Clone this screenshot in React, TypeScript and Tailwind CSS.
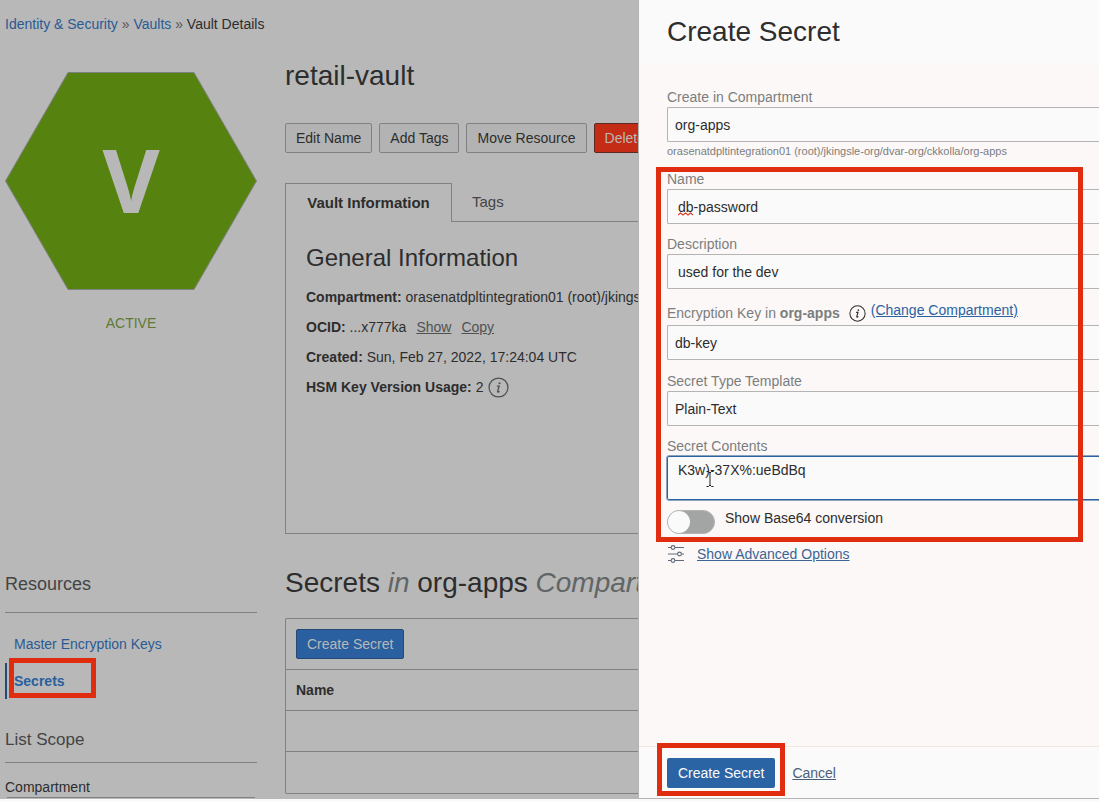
import React from "react";

const selectClass =
  "block h-[35px] w-full appearance-none rounded-l-[2px] border border-r-0 border-[#b4b4b4] bg-[#fafafa] px-[7px] text-[#2d2d2d] outline-none";
const inputClass =
  "block h-[35px] w-full rounded-l-[2px] border border-r-0 border-[#b4b4b4] bg-[#fafafa] px-[10px] text-[#2d2d2d] outline-none";
const labelClass = "block leading-5 text-[#7c7e7e]";
const actionClass =
  "h-[30px] shrink-0 rounded-[2px] border border-[#7f8282] bg-[#b3b3b3] px-[10px] whitespace-nowrap text-[#2d2d2d]";

function InfoIcon({ size }: { size: number }) {
  return (
    <svg width={size} height={size} viewBox="0 0 20 20" fill="none" stroke="currentColor" aria-hidden="true">
      <circle cx="10" cy="10" r="9" strokeWidth="1.2" />
      <path d="M8.4 8.7h2.2L9.2 13.4q-.3 1.2.9.7l.9-.5" strokeWidth="1.3" />
      <circle cx="11" cy="6" r="1" fill="currentColor" stroke="none" />
    </svg>
  );
}

function SlidersIcon() {
  return (
    <svg width="18" height="18" viewBox="0 0 18 18" fill="none" stroke="#5d6b7a" strokeWidth="1.1" aria-hidden="true">
      <path d="M1 2.500h3M8 2.500h9M1 9h9.500M14.500 9H17M1 15.500h3M8 15.500h9" />
      <circle cx="6" cy="2.500" r="1.900" />
      <circle cx="12.500" cy="9" r="1.900" />
      <circle cx="6" cy="15.500" r="1.900" />
    </svg>
  );
}

function Sidebar() {
  return (
    <aside className="w-[252px] shrink-0 pt-[14px]">
      <nav aria-label="Breadcrumb" className="leading-5 whitespace-nowrap text-[#2d2d2d]">
        <a href="#identity" className="text-[#2a5a94]">Identity &amp; Security</a>
        <span className="text-[#555]"> » </span>
        <a href="#vaults" className="text-[#2a5a94]">Vaults</a>
        <span className="text-[#555]"> » </span>
        <span>Vault Details</span>
      </nav>
      <svg className="mt-[38px] block" width="252" height="218" viewBox="0 0 252 218" role="img" aria-label="Vault">
        <path d="M63 .5H189L251.500 109 189 217.500H63L.5 109Z" fill="#56830f" stroke="#7f8282" />
        <text x="126" y="141" textAnchor="middle" fontFamily="'Noto Sans', sans-serif" fontWeight="700" fontSize="88" fill="#b8b8b8">V</text>
      </svg>
      <p className="mt-[23px] text-center leading-5 text-[#5f7a35]">ACTIVE</p>

      <h2 className="mt-[239px] border-b border-[#7f8282] pb-4 text-lg leading-6 text-[#444]">Resources</h2>
      <ul className="mt-[12px]">
        <li className="flex h-[38px] items-center pl-[9px]">
          <a href="#keys" className="text-[#2a5a94]">Master Encryption Keys</a>
        </li>
        <li className="relative flex h-[36px] items-center border-l-2 border-[#254a78] pl-[7px]">
          <a href="#secrets" className="font-bold text-[#2a5f9e]">Secrets</a>
          <span className="pointer-events-none absolute -top-[5px] left-[2px] h-[40px] w-[87px] border-[5px] border-[#e02d10]" />
        </li>
      </ul>
      <h2 className="mt-[29px] border-b border-[#7f8282] pb-[10px] text-[17px] leading-6 text-[#444]">List Scope</h2>
      <h3 className="mt-[14px] leading-5 text-[#2d2d2d]">Compartment</h3>
      <div className="mx-[2px] border-t border-[#7f8282]" />
    </aside>
  );
}

function VaultDetails() {
  return (
    <main className="min-w-0 flex-1 overflow-hidden pt-[58px] text-[#2d2d2d]">
      <h1 className="text-[28px] leading-9">retail-vault</h1>
      <div className="mt-[29px] flex gap-[7px]">
        <button className={actionClass}>Edit Name</button>
        <button className={actionClass}>Add Tags</button>
        <button className={actionClass}>Move Resource</button>
        <button className="h-[30px] shrink-0 rounded-[2px] border border-[#5c2a22] bg-[#c42c15] px-[10px] text-[#b8b8b8]">Delete</button>
      </div>

      <div className="mt-[30px] flex" role="tablist">
        <button role="tab" aria-selected="true" className="h-[39px] w-[167px] shrink-0 border border-b-0 border-[#7f8282] text-[15px] font-bold">
          Vault Information
        </button>
        <div className="flex flex-1 border-b border-[#7f8282]">
          <button role="tab" aria-selected="false" className="px-5 text-[15px] text-[#444]">Tags</button>
        </div>
      </div>
      <section className="h-[312px] overflow-hidden border-b border-l border-[#7f8282] px-5 pt-[20px]">
        <h2 className="text-2xl leading-8">General Information</h2>
        <div className="mt-[8px] whitespace-nowrap leading-[30px]">
          <p><b>Compartment:</b> orasenatdpltintegration01 (root)/jkingsle-org/dvar-org</p>
          <p>
            <b>OCID:</b> ...x777ka
            <button className="ml-[10px] text-[#505252] underline">Show</button>
            <button className="ml-[10px] text-[#505252] underline">Copy</button>
          </p>
          <p><b>Created:</b> Sun, Feb 27, 2022, 17:24:04 UTC</p>
          <p className="flex items-center gap-1">
            <b>HSM Key Version Usage:</b> 2
            <span className="text-[#505252]"><InfoIcon size={21} /></span>
          </p>
        </div>
      </section>

      <h2 className="mt-[31px] text-[28px] leading-9 whitespace-nowrap">
        Secrets <i className="text-[#626565]">in</i> org-apps <i className="text-[#626565]">Compartment</i>
      </h2>
      <div className="mt-[17px] rounded-l-[2px] border-y border-l border-[#7f8282]">
        <div className="p-[10px]">
          <button className="h-[30px] rounded-[2px] border border-[#264a76] bg-[#2b60a0] px-[10px] text-[#b8b8b8]">Create Secret</button>
        </div>
        <table className="w-full border-collapse text-left">
          <thead>
            <tr className="h-[41px] border-t border-[#7f8282]"><th className="px-[10px]">Name</th></tr>
          </thead>
          <tbody>
            <tr className="h-[41px] border-t border-[#7f8282]"><td /></tr>
            <tr className="h-[41px] border-t border-[#7f8282]"><td /></tr>
          </tbody>
        </table>
      </div>
    </main>
  );
}

function CreateSecretDrawer() {
  return (
    <aside className="flex w-[461px] shrink-0 flex-col border-b border-l border-[#b4b4b4] bg-[#fbf8f7]">
      <header className="h-[65px] bg-[#fafafa] pt-[14px] pl-7">
        <h1 className="text-[28px] leading-9 text-[#2d2d2d]">Create Secret</h1>
      </header>
      <form className="flex-1 pt-[22px] pl-7" onSubmit={(e) => e.preventDefault()}>
        <label htmlFor="compartment" className={labelClass}>Create in Compartment</label>
        <select id="compartment" className={selectClass}><option>org-apps</option></select>
        <p className="text-[11px] leading-[18px] text-[#7c7e7e]">
          orasenatdpltintegration01 (root)/jkingsle-org/dvar-org/ckkolla/org-apps
        </p>

        <div className="relative mt-[9px]">
          <label htmlFor="name" className={labelClass}>Name</label>
          <div className="relative">
            <input id="name" className={inputClass} defaultValue="db-password" spellCheck={false} />
            <svg className="pointer-events-none absolute top-[23px] left-[11px]" width="16" height="4" viewBox="0 0 16 4" fill="none" stroke="#d9402a" strokeWidth="1.2" aria-hidden="true">
              <path d="M0 3 2.500 1 5 3 7.500 1 10 3 12.500 1 15 3" />
            </svg>
          </div>
          <label htmlFor="description" className={`${labelClass} mt-[10px]`}>Description</label>
          <input id="description" className={inputClass} defaultValue="used for the dev" />

          <div className="mt-3 flex h-6 items-center">
            <label htmlFor="key" className="text-[#7c7e7e]">Encryption Key in <b>org-apps</b></label>
            <span className="ml-[9px] text-[#2d2d2d]"><InfoIcon size={17} /></span>
            <a href="#change" className="mb-[6px] ml-[5px] text-[#2a62a3] underline">(Change Compartment)</a>
          </div>
          <select id="key" className={selectClass}><option>db-key</option></select>

          <label htmlFor="template" className={`${labelClass} mt-[11px]`}>Secret Type Template</label>
          <select id="template" className={selectClass}><option>Plain-Text</option></select>

          <label htmlFor="contents" className={`${labelClass} mt-[10px]`}>Secret Contents</label>
          <div className="relative">
            <textarea
              id="contents"
              className="block h-[44px] w-full resize-none overflow-hidden rounded-l-[2px] border border-r-0 border-[#2a62a3] bg-[#fafafa] px-[10px] pt-[3px] leading-5 text-[#2d2d2d] outline-1 outline-[#8ba3c0]"
              defaultValue="K3w)-37X%:ueBdBq"
              spellCheck={false}
            />
            <svg className="pointer-events-none absolute top-[15px] left-[39px]" width="8" height="16" viewBox="0 0 8 16" fill="none" stroke="#222" aria-hidden="true">
              <path d="M.5.500H2.500L4 2 5.500.500H7.500M4 2V14M.5 15.500H2.500L4 14 5.500 15.500H7.500" />
            </svg>
          </div>

          <label className="mt-[10px] flex h-6 items-start gap-[10px] leading-4 text-[#2d2d2d]">
            <input type="checkbox" role="switch" className="peer sr-only" />
            <span className="flex h-6 w-12 items-center rounded-full border border-[#b4b4b4] bg-[#a3a4a4] peer-checked:justify-end">
              <span className="h-[22px] w-[22px] rounded-full bg-[#fafafa]" />
            </span>
            Show Base64 conversion
          </label>
          <span className="pointer-events-none absolute -top-[2px] right-4 -bottom-2 -left-[11px] border-[5px] border-[#e02d10]" />
        </div>

        <div className="mt-[10px] flex h-5 items-center gap-3">
          <SlidersIcon />
          <a href="#advanced" className="text-[#3b6594] underline">Show Advanced Options</a>
        </div>
      </form>
      <footer className="flex h-[52px] items-center gap-[17px] border-t border-[#f4e6df] bg-[#fafafa] pl-7">
        <div className="relative">
          <button className="h-[30px] rounded-[2px] bg-[#2b64a4] px-[11px] text-[#fafafa]">Create Secret</button>
          <span className="pointer-events-none absolute -inset-x-[10px] -top-[15px] -bottom-2 border-[5px] border-[#e02d10]" />
        </div>
        <button className="text-[#4b5f77] underline">Cancel</button>
      </footer>
    </aside>
  );
}

export default function App() {
  return (
    <div className="flex min-h-screen bg-[#fafafa] pb-[3px] font-['Liberation_Sans',Arial,sans-serif] text-sm">
      <div className="flex min-w-0 flex-1 gap-7 overflow-hidden bg-[#b8b8b8] pl-[5px]">
        <Sidebar />
        <VaultDetails />
      </div>
      <CreateSecretDrawer />
    </div>
  );
}
